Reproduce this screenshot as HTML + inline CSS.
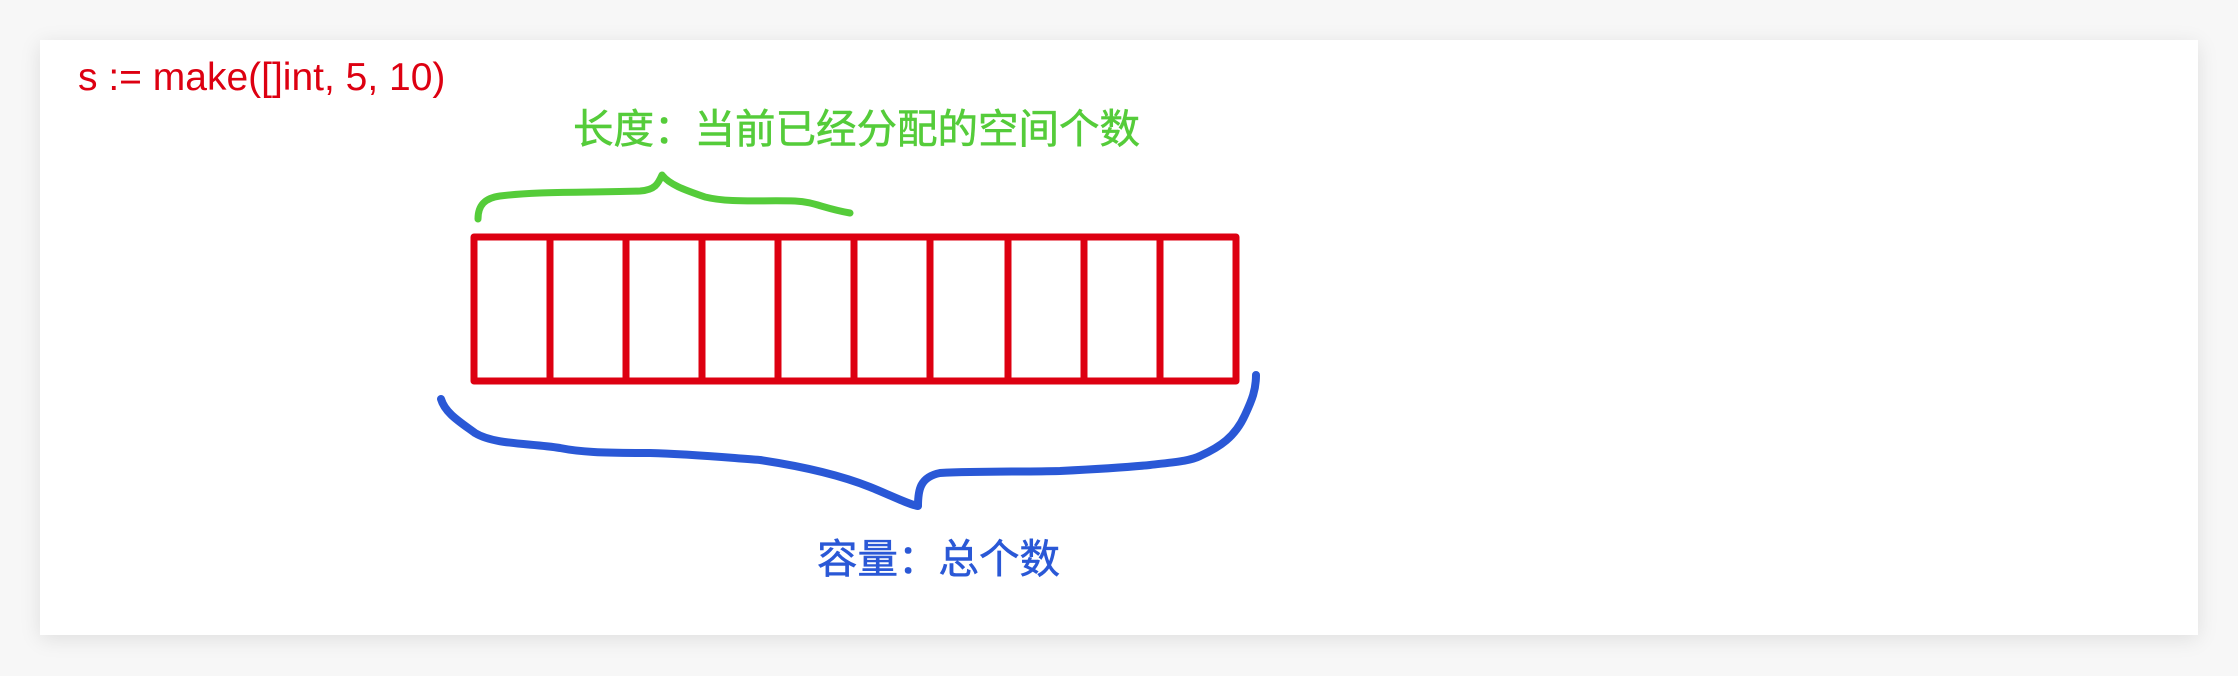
<!DOCTYPE html>
<html><head><meta charset="utf-8"><style>
html,body{margin:0;padding:0;background:#f7f7f7;width:2238px;height:676px;overflow:hidden}
.card{position:absolute;left:40px;top:40px;width:2158px;height:595px;background:#fff;box-shadow:0 4px 20px rgba(0,0,0,0.10)}
.t{position:absolute;font-family:"Liberation Sans","Noto Sans CJK SC",sans-serif;white-space:nowrap;font-weight:400;-webkit-text-stroke:0.6px currentColor}
</style></head><body>
<div class="card"></div>
<div class="t" style="left:78px;top:56px;font-size:39px;color:#dd0011;-webkit-text-stroke:0">s := make([]int, 5, 10)</div>
<div class="t" style="left:573px;top:96px;font-size:40.5px;color:#55cc3a">长度：当前已经分配的空间个数</div>
<div class="t" style="left:817px;top:526px;font-size:40.5px;color:#2a58d6">容量：总个数</div>
<svg width="2238" height="676" style="position:absolute;left:0;top:0" fill="none" stroke-linecap="round" stroke-linejoin="round">
<g stroke="#dd0011" stroke-width="7">
<rect x="474" y="237" width="762" height="144"/>
<path d="M550 237V381M626 237V381M702 237V381M778 237V381M854 237V381M930 237V381M1008 237V381M1084 237V381M1160 237V381"/>
</g>
<path stroke="#55cc3a" stroke-width="7" d="M478 219C478 205 485 198 500 196C540 191 580 193 640 191C655 190 658 184 662 175C670 185 685 190 705 197C730 203 760 200 795 201C815 202 822 208 850 213"/>
<path stroke="#2a58d6" stroke-width="8" d="M441 399C445 413 460 422 475 433C495 445 530 443 560 448C580 452 600 453 650 453C690 454 720 457 760 460C800 466 840 475 870 487C890 495 910 505 918 506C918 490 920 477 940 473C980 471 1020 472 1060 471C1100 469 1130 467 1150 465C1175 462 1190 461 1200 456C1220 447 1235 437 1245 415C1252 400 1256 390 1256 375"/>
</svg>
</body></html>
